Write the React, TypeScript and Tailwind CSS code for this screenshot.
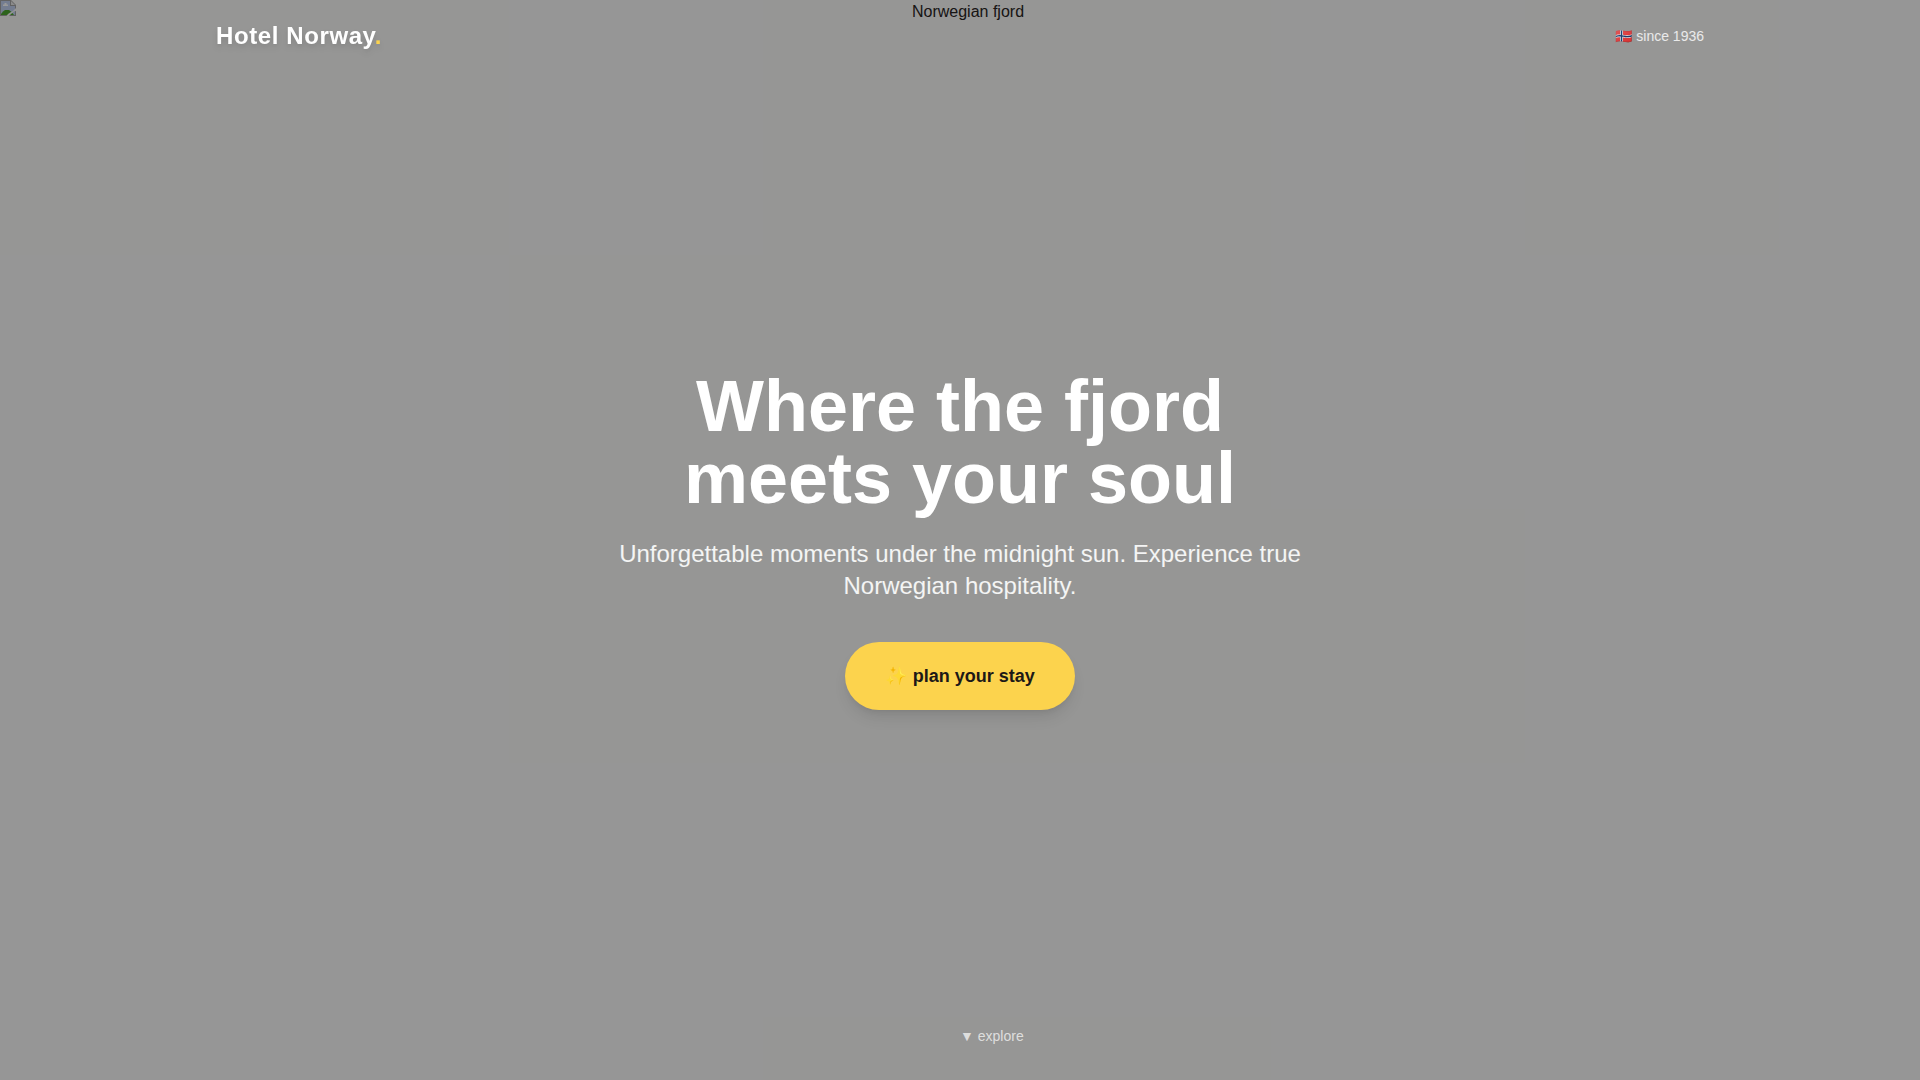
const FONT = "font-['Liberation_Sans','DejaVu_Sans','Noto_Color_Emoji',sans-serif]";

export default function App() {
  return (
    <div className={`relative min-h-screen bg-stone-50 text-[#1c1917] ${FONT}`}>
      <Backdrop />

      <div className="relative grid min-h-screen grid-rows-[1fr_auto_1fr]">
        <Header />

        <main className="mx-auto w-full max-w-3xl text-center">
          <h1 className="text-7xl leading-none font-bold text-white">
            Where the fjord
            <br />
            meets your soul
          </h1>
          <p className="mt-6 text-2xl font-light text-white/90">
            Unforgettable moments under the midnight sun. Experience true Norwegian hospitality.
          </p>
          <button
            type="button"
            className="mt-10 cursor-pointer rounded-full bg-[#fcd34d] px-10 py-5 text-lg font-bold shadow-lg transition-colors hover:bg-[#fbbf24]"
          >
            ✨ plan your stay
          </button>
        </main>

        <footer className="self-end pb-[34px] pl-[50%] text-sm text-white/70">▼ explore</footer>
      </div>
    </div>
  );
}

function Backdrop() {
  return (
    <div className="absolute inset-0">
      <div className="flex items-start text-[#292524]">
        <MissingImageIcon />
        <span className="flex-1 text-center">Norwegian fjord</span>
      </div>
      <div className="absolute inset-0 bg-black/40" />
    </div>
  );
}

function Header() {
  return (
    <header className="mx-auto flex w-full max-w-screen-2xl items-center justify-between self-start px-6 py-5">
      <div className="text-2xl font-bold tracking-wide text-white [filter:drop-shadow(0_4px_3px_rgb(0_0_0/0.07))_drop-shadow(0_2px_2px_rgb(0_0_0/0.06))]">
        Hotel Norway<span className="text-[#fcd34d]">.</span>
      </div>
      <div className="text-sm text-white/80">🇳🇴 since 1936</div>
    </header>
  );
}

function MissingImageIcon() {
  return (
    <svg width="16" height="16" viewBox="0 0 16 16" aria-hidden="true">
      <path d="M0 0h11l5 5v11H0z" fill="#a3a3a3" />
      <path d="M1 1h9v5h5v9H1z" fill="#c2d1f0" />
      <path d="M3 6V4.500h1.500V3h2v1.500H8V6z" fill="#fff" />
      <path d="M1 15v-1l2-2.500L5 10h4l2 1.500L14 15z" fill="#4ca52f" />
      <path d="M11 1l4 4h-4z" fill="#e8e8e8" />
      <path d="M10 0h1v5h5v1h-6z" fill="#a3a3a3" />
      <path d="M16 8v3l-2 .5-3.500 3L9 16H6.500L8 14l3-2 2-1 2-2z" fill="#fafaf9" />
    </svg>
  );
}
